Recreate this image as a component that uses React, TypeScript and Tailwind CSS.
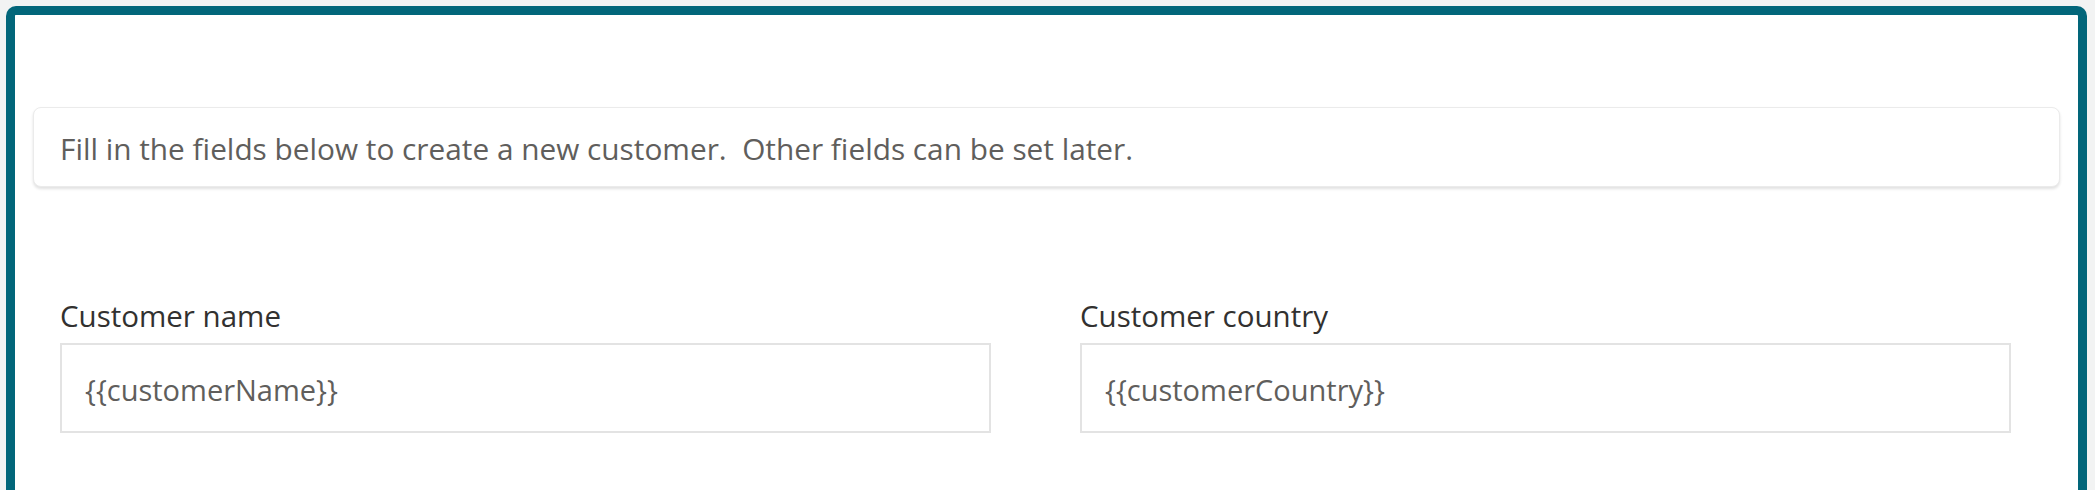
import React from 'react';

const font = { fontFamily: '"Segoe UI", "Open Sans", sans-serif' };

function Field({ label, value }: { label: string; value: string }) {
  return (
    <div className="w-[931px]">
      <label className="block text-[29.5px] leading-[40px] text-[#323130] mb-[7px]">{label}</label>
      <div className="h-[90px] border-2 border-[#e3e3e3] bg-white flex items-center pl-[23px] pt-[3px] text-[29px] text-[#605e5c]">
        {value}
      </div>
    </div>
  );
}

export default function App() {
  return (
    <div className="min-h-screen bg-[#f2f3f3] pt-[6px] pl-[6px] pr-[8px]" style={font}>
      <div className="rounded-t-[10px] border-[9px] border-b-0 border-[#02667a] bg-white pt-[92px] px-[18px] pb-[120px]">
        <div className="h-[80px] rounded-[8px] border border-[#ebebeb] bg-white shadow-[0_2px_3px_rgba(0,0,0,0.12)] flex items-center pl-[26px] pt-[4px] text-[29.8px] text-[#605e5c]">
          Fill in the fields below to create a new customer.&nbsp; Other fields can be set later.
        </div>

        <div className="mt-[109px] pl-[27px] flex gap-[89px]">
          <Field label="Customer name" value="{{customerName}}" />
          <Field label="Customer country" value="{{customerCountry}}" />
        </div>
      </div>
    </div>
  );
}
